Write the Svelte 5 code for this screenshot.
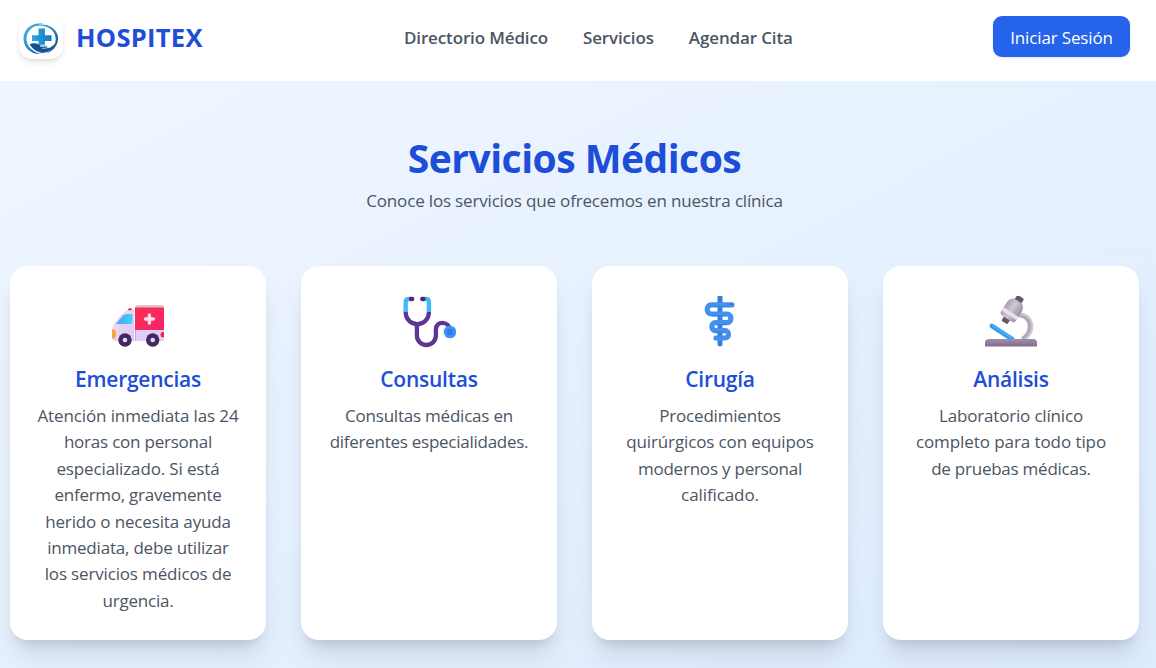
<script>
  const links = ['Directorio Médico', 'Servicios', 'Agendar Cita'];
  const services = [
    {
      icon: 'ambulance',
      title: 'Emergencias',
      lines: [
        ['Atención inmediata las 24', -0.12],
        ['horas con personal', -0.22],
        ['especializado. Si está', -0.14],
        ['enfermo, gravemente', -0.26],
        ['herido o necesita ayuda', -0.15],
        ['inmediata, debe utilizar', -0.2],
        ['los servicios médicos de', -0.16],
        ['urgencia.', -0.2],
      ],
    },
    {
      icon: 'stethoscope',
      title: 'Consultas',
      lines: [['Consultas médicas en', -0.22], ['diferentes especialidades.', -0.26]],
    },
    {
      icon: 'medical',
      title: 'Cirugía',
      lines: [
        ['Procedimientos', -0.2],
        ['quirúrgicos con equipos', -0.13],
        ['modernos y personal', -0.22],
        ['calificado.', -0.1],
      ],
    },
    {
      icon: 'microscope',
      title: 'Análisis',
      lines: [['Laboratorio clínico', -0.18], ['completo para todo tipo', -0.08], ['de pruebas médicas.', -0.24]],
    },
  ];
</script>

<div class="page">
  <header>
    <div class="brand">
      <div class="logo">
        <svg viewBox="0 0 36 32" width="36" height="32" aria-hidden="true">
          <defs>
            <linearGradient id="ring" x1="0" x2="1" y1="0" y2="1">
              <stop offset="0" stop-color="#53bfe8" />
              <stop offset=".5" stop-color="#2686c4" />
              <stop offset="1" stop-color="#0f4285" />
            </linearGradient>
            <linearGradient id="cross" x1="0" x2="1">
              <stop offset="0" stop-color="#27a9e6" />
              <stop offset="1" stop-color="#1678c0" />
            </linearGradient>
          </defs>
          <path d="M20 .8C8-1 .5 7 .5 15.500.5 25 8.500 31.500 18 31c-8-1.500-14.500-7.500-14.500-15C3.500 8 10 2 20 .8Z" fill="url(#ring)" />
          <path d="M8 5C18-2.500 33.500 2.500 35 14c.8 7-4 14-12 16.500C30 26 33.500 20.500 32.500 14 31 4 18-.2 8 5Z" fill="url(#ring)" />
          <path d="M7 21c2 5 7 8.500 13 9 7-1 11.500-5 13-10-3 4.500-7.500 7.200-12.500 7C15 26.800 10 24.500 7 21Z" fill="#1d62a8" />
          <path d="M15.500 5.500h6.400v6.800h6.600v5.800h-6.600v3.700h-6.400v-3.700H9v-5.800h6.500Z" fill="url(#cross)" />
          <path d="M6.500 21.500c4-2.200 8.500-1.300 11.500 1.200h5c1.600 0 2 2 .4 2.300l3.600-.3 5.500-4c-3 7-9 8.500-15 7-5-1-9-3.200-11-6.200Z" fill="#14528f" />
          <path d="M17 23.400h6.500c1.300 0 1.400 1.500.2 1.700l-4.700.3" fill="none" stroke="#d8edf7" stroke-width=".7" />
        </svg>
      </div>
      <span class="name">HOSPITEX</span>
    </div>
    <nav>
      {#each links as link}
        <a href="#top">{link}</a>
      {/each}
    </nav>
    <button>Iniciar Sesión</button>
  </header>

  <main>
    <h1>Servicios Médicos</h1>
    <p class="lead">Conoce los servicios que ofrecemos en nuestra clínica</p>

    <section class="cards">
      {#each services as service}
        <article>
          <div class="icon">
            {#if service.icon === 'ambulance'}
              <svg viewBox="0 0 54 54" width="54" height="54" aria-hidden="true">
                <defs>
                  <linearGradient id="box" x1="0" x2="1" y1="0" y2="1">
                    <stop offset="0" stop-color="#f92f51" />
                    <stop offset="1" stop-color="#f52467" />
                  </linearGradient>
                  <linearGradient id="cab" x1="0" x2="1" y1="0" y2="1">
                    <stop offset="0" stop-color="#f2dcfb" />
                    <stop offset="1" stop-color="#dec6f0" />
                  </linearGradient>
                  <linearGradient id="glass" x1="0" x2="1">
                    <stop offset="0" stop-color="#48a2ee" />
                    <stop offset="1" stop-color="#49cffb" />
                  </linearGradient>
                </defs>
                <path d="M17 14.500c0-3.500 4-3.500 4 0Z" fill="#c32f55" />
                <path d="M15.500 15.500q0-1.500 1.500-1.500h6v3h-8Z" fill="#e0c6c9" />
                <path d="M1 36c0-5 1-8 4-11l6-7c2-2 4-3 7-3h6v30H4q-3 0-3-3Z" fill="url(#cab)" />
                <path d="M24 13q0-4 4-4H50q3 0 3 3v33H24Z" fill="#e2cdf5" />
                <path d="M24 12.500Q24 9 28 9H50q3 0 3 3v2H24Z" fill="#e3bfc8" />
                <path d="M24 11.500h29V34H24Z" fill="url(#box)" />
                <path d="M23.500 15v30" stroke="#f7edfb" stroke-width="1" />
                <path d="M24.500 34v11" stroke="#c3a8dc" stroke-width="1" />
                <path d="M5 28l7-8.500q1.500-1.500 4-1.500h5.500v8q0 2-2 2Z" fill="url(#glass)" />
                <path d="M1 33.500h2q2 0 2 4t-2 5H1Z" fill="#f8a62d" />
                <path d="M53 36h-1.500q-2 0-2 2.700t2 2.600H53Z" fill="#e8255d" />
                <path d="M38.400 19v8M34.400 23h8" stroke="#ffdceb" stroke-width="3.400" stroke-linecap="round" />
                <circle cx="14" cy="44" r="6.700" fill="#432863" />
                <circle cx="14" cy="44" r="2.300" fill="#e6d7f3" />
                <circle cx="41.700" cy="44" r="6.700" fill="#432863" />
                <circle cx="41.700" cy="44" r="2.300" fill="#e6d7f3" />
              </svg>
            {:else if service.icon === 'stethoscope'}
              <svg viewBox="0 0 54 54" width="54" height="54" aria-hidden="true">
                <g fill="none">
                  <path d="M3.700 15v1.500a11.600 11.600 0 0 0 23.200 0V15" stroke="#5b3696" stroke-width="4.300" />
                  <path d="M14.900 28v11.500a9.500 9.500 0 0 0 19 0V33.500c0-9 13-9 14 .5" stroke="#5b3696" stroke-width="4.300" />
                  <path d="M8.500 3H6.900C4.700 3 3.700 4.200 3.700 6.300V16M21.900 3h1.800c2.200 0 3.200 1.200 3.200 3.300V16" stroke="#3fb9f7" stroke-width="4.300" />
                  <path d="M9 3h1.200M21.400 3h-1.200" stroke="#4b2b70" stroke-width="4.300" stroke-linecap="round" />
                </g>
                <circle cx="48" cy="36" r="6.300" fill="#3d94f6" />
                <circle cx="48" cy="36" r="3.200" fill="#2f7eec" />
              </svg>
            {:else if service.icon === 'medical'}
              <svg viewBox="0 0 54 54" width="54" height="54" aria-hidden="true">
                <path d="M27 1.500v46.500" stroke="#367fda" stroke-width="5" stroke-linecap="round" />
                <path d="M39 8.800H18.500c-5.700 0-5.700 9.200 0 9.200H34c5.200 0 5.200 8.700 0 8.700H22.500c-4.800 0-4.800 8 0 8H32c4.700 0 4.700 7.300 0 7.300h-9" fill="none" stroke="#4390ef" stroke-width="5.200" stroke-linecap="round" stroke-linejoin="round" />
                <path d="M22 10.500h14M19 19.800h14M24 28.500h10M23 36.200h9" fill="none" stroke="#357fdc" stroke-width="1" />
                <circle cx="38.300" cy="8" r=".8" fill="#234d9c" />
              </svg>
            {:else}
              <svg viewBox="0 0 54 54" width="54" height="54" aria-hidden="true">
                <defs>
                  <linearGradient id="tube" x1="0" x2="1">
                    <stop offset="0" stop-color="#aaa0b0" />
                    <stop offset=".45" stop-color="#cdc7d0" />
                    <stop offset="1" stop-color="#9a91a0" />
                  </linearGradient>
                  <linearGradient id="base" x1="0" x2="0" y1="0" y2="1">
                    <stop offset="0" stop-color="#a18dac" />
                    <stop offset="1" stop-color="#816d8b" />
                  </linearGradient>
                </defs>
                <path d="M34 18.500c14 1 16.500 17 4.500 25" fill="none" stroke="#b3a9bc" stroke-width="5" />
                <path d="M35 17.500c15 1.500 18 16.500 6 26" fill="none" stroke="#d0c7d7" stroke-width="2" />
                <path d="M8 30l20 13" stroke="#329bed" stroke-width="4.800" stroke-linecap="round" />
                <path d="M8.500 29l19 12.500" stroke="#4bb3fa" stroke-width="1.500" stroke-linecap="round" />
                <g transform="translate(35.500 3) rotate(33)">
                  <rect x="-4" y="-2.500" width="8" height="7" rx="1.500" fill="#635a66" />
                  <rect x="-3.500" y="21.500" width="7" height="6.500" rx="1.500" fill="#635a68" />
                  <path d="M-5 2.500H5q3.800 3 3.800 7.500v10.500q0 2-2.500 2.800H-6q-2.800-.8-2.800-2.800V10q0-4.500 3.800-7.500Z" fill="url(#tube)" />
                  <path d="M-8.800 15.500H8.800v4H-8.800Z" fill="#eadcf5" />
                </g>
                <path d="M1 50.500V47q0-4 4-4h44q4 0 4 4v3.500Z" fill="url(#base)" />
              </svg>
            {/if}
          </div>
          <h2>{service.title}</h2>
          <p>
            {#each service.lines as [text, spacing]}
              <span style="letter-spacing: {spacing}px">{text}</span>
            {/each}
          </p>
        </article>
      {/each}
    </section>
  </main>
</div>

<style>
  :global(body) { margin: 0; overflow: hidden; }
  .page {
    width: 1156px; height: 668px; overflow: hidden; box-sizing: border-box;
    display: flex; flex-direction: column;
    font-family: "Open Sans", "Noto Sans", sans-serif; color: #4b5563;
  }
  header {
    height: 81px; box-sizing: border-box; background: #fff;
    display: grid; grid-template-columns: 385px 1fr auto; align-items: start;
    padding: 15px 26px 0 19px; flex: none;
  }
  .brand { display: flex; align-items: center; gap: 13px; }
  .logo {
    width: 44px; height: 44px; border-radius: 13px; display: grid; place-items: center;
    box-sizing: border-box; padding-top: 3px;
    box-shadow: 0 4px 7px -1px #0000001a, 0 2px 4px -2px #0000001a;
  }
  .name { font-size: 25.500px; letter-spacing: 0.3px; font-weight: 700; color: #1d4ed8; line-height: 44px; }
  nav { display: flex; gap: 35px; line-height: 46px; }
  nav a {
    color: #4b5563; text-decoration: none; font-size: 17px; font-weight: 600;
    letter-spacing: -0.14px; white-space: nowrap;
  }
  button {
    width: 137px; height: 41px; margin-top: 1px; padding: 2px 0 0; border: 0; border-radius: 9px;
    background: #2563eb; color: #fff; font-family: inherit; font-size: 17px; letter-spacing: -0.15px;
    box-shadow: 0 1px 3px #0000001a;
  }
  main {
    flex: 1; box-sizing: border-box; padding: 53px 17px 0 10px; text-align: center;
    background: linear-gradient(to bottom right, #eff6ff, #dbeafe 112%);
  }
  h1 { margin: 0; font-size: 39px; letter-spacing: -0.5px; line-height: 48px; color: #1d4ed8; font-weight: 700; }
  .lead { margin: 6px 0 0; font-size: 17px; letter-spacing: -0.17px; line-height: 26px; }
  .cards { display: grid; grid-template-columns: repeat(4, 256px); gap: 35px; margin-top: 52px; }
  article {
    box-sizing: border-box; height: 374px; padding: 30px 20px 0; border-radius: 18px; background: #fff;
    box-shadow: 0 20px 27px -5px #0000001a, 0 9px 11px -6px #0000001f;
  }
  .icon { height: 54px; margin-bottom: 15px; }
  .icon svg { display: inline-block; vertical-align: top; }
  h2 { margin: 0 0 10px; font-size: 21px; letter-spacing: -0.25px; line-height: 28px; font-weight: 600; color: #1d4ed8; }
  article p { margin: 0; font-size: 17px; line-height: 26.400px; }
  article p span { display: block; white-space: nowrap; }
</style>
